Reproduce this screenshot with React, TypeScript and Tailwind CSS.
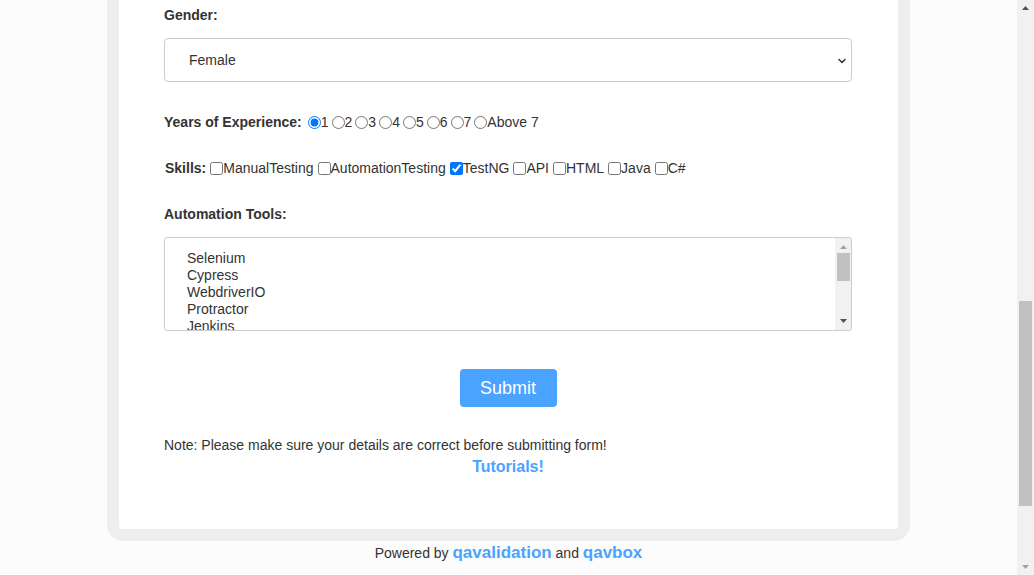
import { ChevronDown } from "lucide-react";

const years = ["1", "2", "3", "4", "5", "6", "7", "Above 7"];
const skills = [
  { name: "ManualTesting", checked: false },
  { name: "AutomationTesting", checked: false },
  { name: "TestNG", checked: true },
  { name: "API", checked: false },
  { name: "HTML", checked: false },
  { name: "Java", checked: false },
  { name: "C#", checked: false },
];
const tools = ["Selenium", "Cypress", "WebdriverIO", "Protractor", "Jenkins"];

function Arrow({ up, color }: { up: boolean; color: string }) {
  return (
    <svg width="7" height="4" viewBox="0 0 7 4" className="block">
      <polygon points={up ? "0,4 7,4 3.5,0" : "0,0 7,0 3.5,4"} fill={color} />
    </svg>
  );
}

export default function App() {
  return (
    <div
      className="flex h-[575px] overflow-hidden bg-[#fcfcfc] text-[#333]"
      style={{ fontFamily: '"Liberation Sans", Arial, sans-serif' }}
    >
      <div className="flex flex-1 flex-col items-center">
        {/* Card */}
        <div className="w-[803px] rounded-b-[16px] bg-[#eeeeee] px-[12px] pb-[12px]">
          <div className="rounded-b-[4px] bg-white pl-[45px] pr-[46px] pt-[7px] pb-[53px]">
            <label className="block text-[14px] font-bold leading-[16px]">Gender:</label>
            <div className="relative mt-[15px] flex h-[44px] items-center rounded-[4px] border border-[#cccccc] pl-[24px] text-[14px]">
              Female
              <ChevronDown className="absolute right-[3px] top-[16px] h-[12px] w-[12px] text-[#333]" strokeWidth={3} />
            </div>

            {/* Years */}
            <div className="mt-[30px] flex h-[20px] items-center text-[14px]">
              <span className="mr-[3px] font-bold">Years of Experience:</span>
              {years.map((y, i) => (
                <label key={y} className="flex items-center">
                  <input
                    type="radio"
                    name="exp"
                    defaultChecked={i === 0}
                    className="ml-[3px] h-[13px] w-[13px] accent-[#0075ff]"
                  />
                  {y}
                </label>
              ))}
            </div>

            {/* Skills */}
            <div className="mt-[26px] flex h-[20px] items-center pl-[1px] text-[14px]">
              <span className="font-bold">Skills:</span>
              {skills.map((s) => (
                <label key={s.name} className="flex items-center">
                  <input
                    type="checkbox"
                    defaultChecked={s.checked}
                    className="ml-[4px] h-[13px] w-[13px] accent-[#0075ff]"
                  />
                  {s.name}
                </label>
              ))}
            </div>

            <div className="mt-[26px] flex h-[20px] items-center text-[14px] font-bold">Automation Tools:</div>

            {/* Tools listbox */}
            <div className="mt-[13px] flex h-[94px] overflow-hidden rounded-[3px] border border-[#cccccc]">
              <div className="flex-1 overflow-hidden pl-[22px] pt-[12px] text-[14px] leading-[17px]">
                {tools.map((t) => (
                  <div key={t}>{t}</div>
                ))}
              </div>
              <div className="flex w-[16px] flex-col items-center bg-[#f1f1f1] py-[7px]">
                <Arrow up color="#a3a3a3" />
                <div className="mt-[4px] h-[28px] w-[13px] bg-[#c1c1c1]" />
                <div className="flex-1" />
                <Arrow up={false} color="#505050" />
              </div>
            </div>

            <div className="mt-[38px] flex justify-center">
              <button className="h-[38px] w-[97px] rounded-[4px] bg-[#4aa3ff] text-[18px] text-white">
                Submit
              </button>
            </div>

            <p className="mt-[30px] text-[14px] leading-[17px]">
              Note: Please make sure your details are correct before submitting form!
            </p>
            <p className="mt-[4px] text-center text-[16px] font-bold leading-[18px] text-[#4aa3ff]">
              Tutorials!
            </p>
          </div>
        </div>

        <p className="mt-[3px] text-[14px] leading-[18px]">
          Powered by <span className="text-[17px] font-bold text-[#4aa3ff]">qavalidation</span> and{" "}
          <span className="text-[17px] font-bold text-[#4aa3ff]">qavbox</span>
        </p>
      </div>

      {/* Page scrollbar */}
      <div className="flex w-[17px] flex-col items-center bg-[#f1f1f1] pt-[6px] pb-[6px]">
        <Arrow up color="#505050" />
        <div className="flex-1" />
        <div className="h-[205px] w-[13px] bg-[#c1c1c1]" />
        <div className="mt-[59px]" />
        <Arrow up={false} color="#a3a3a3" />
      </div>
    </div>
  );
}
